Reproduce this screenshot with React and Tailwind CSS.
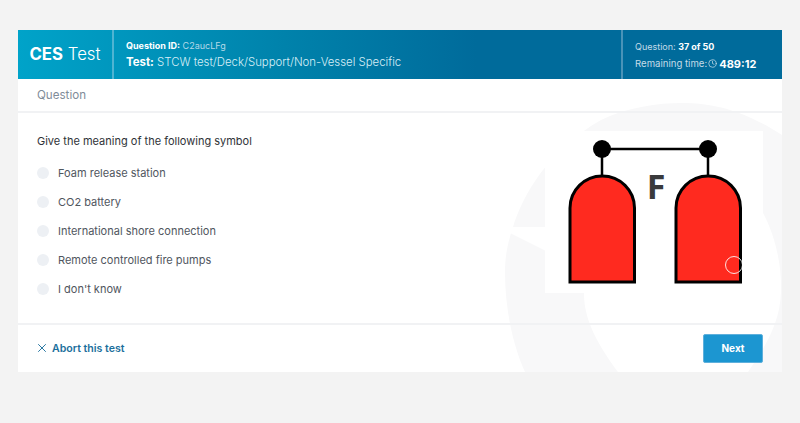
import React from 'react';
import { X, Clock } from 'lucide-react';

const options = [
  'Foam release station',
  'CO2 battery',
  'International shore connection',
  'Remote controlled fire pumps',
  "I don't know",
];

function Symbol() {
  return (
    <svg width="218" height="162" viewBox="0 0 218 162" className="block">
      <line x1="57" y1="18" x2="163" y2="18" stroke="#000" strokeWidth="2.5" />
      <line x1="57" y1="18" x2="57" y2="46" stroke="#000" strokeWidth="2.5" />
      <line x1="163" y1="18" x2="163" y2="46" stroke="#000" strokeWidth="2.5" />
      <circle cx="57" cy="18" r="9" fill="#000" />
      <circle cx="163" cy="18" r="9" fill="#000" />
      <path d="M25 151 V77 a32.25 32 0 0 1 64.5 0 V151 Z" fill="#ff2a1f" stroke="#000" strokeWidth="3" />
      <path d="M131 151 V77 a32.25 32 0 0 1 64.5 0 V151 Z" fill="#ff2a1f" stroke="#000" strokeWidth="3" />
      <text x="111" y="68" fontFamily="'Open Sans', sans-serif" fontWeight="700" fontSize="34" fill="#3a3a3c" textAnchor="middle">F</text>
      <circle cx="189" cy="134" r="8.5" fill="none" stroke="#fff" strokeOpacity="0.85" strokeWidth="1" />
    </svg>
  );
}

// big faint shape behind the card content
function Watermark() {
  return (
    <svg className="absolute left-0 top-0" width="764" height="342" viewBox="0 0 764 342">
      <path fill="#f8f8f9" d="M487 242 C487 225 490 212 495 197 C505 165 530 120 583 90 C610 77 640 73 664 73 C695 73 725 80 764 105 V342 H507 C495 315 487 280 487 242 Z" />
      <path fill="#fff" d="M745 183 C757 205 764 235 763 262 C762 295 745 320 730 342 H600 C580 315 566 290 566 264 V183 Z" />
      <path fill="#fff" d="M480 197 H530 V222 L492 203 H480 Z" />
    </svg>
  );
}

export default function App() {
  return (
    <div className="min-h-[423px] bg-[#f3f3f3] pt-[30px] px-[18px] font-['Inter',sans-serif]">
      <div className="relative bg-white overflow-hidden h-[342px] flex flex-col">
        <Watermark />

        <div className="relative flex h-[49px] bg-gradient-to-r from-[#00a3c9] via-[#0082ab] via-35% to-[#006b9b] to-60% text-white shrink-0">
          <div className="flex w-[96px] items-center justify-center border-r-2 border-[#4fb4d2] text-[16.8px]">
            <span className="font-bold">CES</span>&nbsp;<span className="font-light">Test</span>
          </div>
          <div className="flex flex-1 flex-col justify-center gap-[2px] pl-[12px]">
            <div className="text-[9px] leading-[13px] text-[#b4d9e8]">
              <span className="font-bold text-white">Question ID:</span> C2aucLFg
            </div>
            <div className="text-[11.4px] leading-[16px] font-light text-[#d8eef6]">
              <span className="font-bold text-white">Test:</span> STCW test/Deck/Support/Non-Vessel Specific
            </div>
          </div>
          <div className="flex w-[161px] flex-col justify-center gap-[2px] border-l-2 border-[#4a93b8] pl-[12px] pt-[2px]">
            <div className="text-[9px] leading-[14px] text-[#c4dce8]">
              Question: <span className="font-bold text-white">37 of 50</span>
            </div>
            <div className="flex items-center text-[9.6px] leading-[16px] text-[#c4dce8]">
              Remaining time:
              <Clock className="ml-[1px] h-[9px] w-[9px]" />
              <span className="ml-[2px] text-[11px] font-bold text-white">489:12</span>
            </div>
          </div>
        </div>

        <div className="relative flex h-[34px] shrink-0 items-center border-b-2 border-[#f1f2f4] pl-[19px] pt-[1px] text-[11.6px] text-[#7f8c99]">
          Question
        </div>

        <div className="relative flex flex-1 justify-between pl-[19px] pr-[19px] pt-[18px]">
          <div className="pt-[1px]">
            <p className="text-[11px] leading-[18px] text-[#2f3338]">Give the meaning of the following symbol</p>
            <ul className="mt-[14px] flex flex-col gap-[11px]">
              {options.map((option) => (
                <li key={option} className="flex h-[18px] items-center text-[11px] text-[#50565e]">
                  <span className="mr-[9px] h-[12px] w-[12px] rounded-full bg-[#edf0f4]" />
                  {option}
                </li>
              ))}
            </ul>
          </div>
          <div className="h-[162px] bg-white">
            <Symbol />
          </div>
        </div>

        <div className="relative flex h-[49px] shrink-0 items-center justify-between border-t-2 border-[#f1f2f4] pl-[17px] pr-[19px]">
          <button className="flex items-center text-[10.6px] font-semibold text-[#1b6f9c]">
            <X className="mr-[3px] h-[14px] w-[14px]" strokeWidth={1.6} />
            Abort this test
          </button>
          <button className="flex h-[29px] w-[60px] items-center justify-center rounded-[2px] border border-[#5fb0dc] bg-[#1c96d1] text-[10px] font-bold text-white">
            Next
          </button>
        </div>
      </div>
    </div>
  );
}
